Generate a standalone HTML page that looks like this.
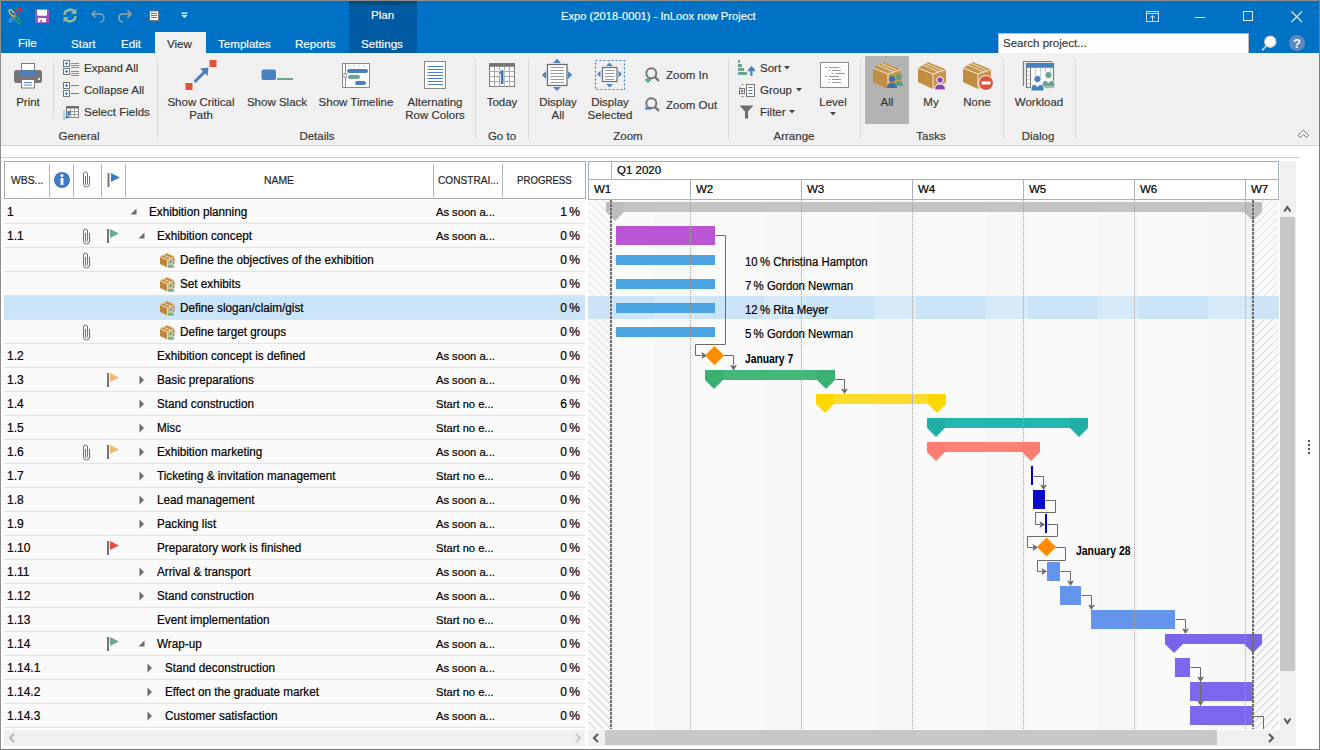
<!DOCTYPE html>
<html><head><meta charset="utf-8">
<style>
*{margin:0;padding:0;box-sizing:border-box}
html,body{width:1320px;height:750px;overflow:hidden;background:#fff;font-family:"Liberation Sans",sans-serif;font-size:12px;color:#1e1e1e}
.a{position:absolute}
.t{position:absolute;white-space:nowrap;line-height:14px}
#title{position:absolute;left:0;top:0;width:1320px;height:53px;background:#0072c6;color:#fff}
#ribbon{position:absolute;left:0;top:53px;width:1320px;height:93px;background:#f0f0f0;border-bottom:1px solid #d5d5d5}
#ribbon .a,#ribbon .t,#ribbon .rl,#ribbon .sep{margin-top:-53px}
#ribbon .t{font-size:11.5px}
.t,.rl{-webkit-text-stroke:0.15px currentColor}
#ribbon .t,.rl{color:#262626}
.tab2{font-size:11.5px}
.sep{position:absolute;width:1px;background:#dadada}
.rl{position:absolute;color:#333;font-size:11.5px;line-height:13px;text-align:center;white-space:nowrap}
.row{position:absolute;left:4px;width:581px;height:24px;background:#fafafa;border-bottom:1px solid #e3e3e3}
.ct{position:absolute;white-space:nowrap;line-height:14px;color:#000;-webkit-text-stroke:0.2px #000}
</style></head><body>
<div id="title">
  <div class="t" style="left:561px;top:9px;font-size:11.2px">Expo (2018-0001) - InLoox now Project</div>
  <div class="a" style="left:349px;top:0;width:68px;height:53px;background:#005ba3"></div>
  <div class="a" style="left:349px;top:1px;width:68px;height:4px;background:#004a80"></div>
  <div class="t" style="left:371px;top:8px;font-size:11.6px">Plan</div>
  <div class="t" style="left:361px;top:37px;font-size:11.6px">Settings</div>
  <div class="a" style="left:155px;top:32px;width:51px;height:21px;background:#f0f0f0"></div>
  <div class="t" style="left:18px;top:36px;font-size:11.6px">File</div>
  <div class="t" style="left:71px;top:37px;font-size:11.6px">Start</div>
  <div class="t" style="left:121px;top:37px;font-size:11.6px">Edit</div>
  <div class="t" style="left:167px;top:37px;color:#333;font-size:11.6px">View</div>
  <div class="t" style="left:218px;top:37px;font-size:11.6px">Templates</div>
  <div class="t" style="left:295px;top:37px;font-size:11.6px">Reports</div>
  <div class="a" style="left:998px;top:33px;width:251px;height:20px;background:#fff;border:1px solid #bdbdbd;border-bottom:none"></div>
  <div class="t" style="left:1003px;top:36px;color:#333;font-size:11.5px">Search project...</div>
  <!-- QAT -->
  <svg class="a" style="left:7px;top:7px" width="16" height="19" viewBox="0 0 16 19">
    <ellipse cx="4.9" cy="6" rx="4" ry="1.7" transform="rotate(50 4.9 6)" fill="none" stroke="#f5d20f" stroke-width="1.2"/>
    <ellipse cx="10.6" cy="5.2" rx="4.7" ry="1.7" transform="rotate(-55 10.6 5.2)" fill="none" stroke="#d9342b" stroke-width="1.2"/>
    <ellipse cx="10.5" cy="12.9" rx="4.6" ry="1.7" transform="rotate(55 10.5 12.9)" fill="none" stroke="#3aa848" stroke-width="1.2"/>
    <ellipse cx="4.9" cy="12" rx="3.6" ry="1.2" transform="rotate(-50 4.9 12)" fill="none" stroke="#7fa9d6" stroke-width="1"/>
    <circle cx="7.5" cy="9" r="1" fill="#e8962a"/>
  </svg>
  <svg class="a" style="left:35px;top:9px" width="14" height="14" viewBox="0 0 14 14">
    <rect x="0" y="0" width="14" height="14" fill="#9857b4"/>
    <path d="M2 0.8 H12 V5.5 Q12 6.8 10.8 6.8 H3.2 Q2 6.8 2 5.5Z" fill="#fff"/>
    <rect x="3" y="9" width="8" height="4.2" fill="#fff"/>
    <rect x="5.4" y="10.8" width="1.6" height="2.4" fill="#9857b4"/>
  </svg>
  <svg class="a" style="left:62px;top:7px" width="16" height="17" viewBox="0 0 16 17">
    <path d="M2.5 8 A5.5 5.5 0 0 1 12.5 5" fill="none" stroke="#8fb8a0" stroke-width="2.6"/>
    <path d="M13.5 9 A5.5 5.5 0 0 1 3.5 12" fill="none" stroke="#8fb8a0" stroke-width="2.6"/>
    <path d="M14.5 1.5 L14.5 7 L9 7Z" fill="#8fb8a0"/>
    <path d="M1.5 15.5 L1.5 10 L7 10Z" fill="#8fb8a0"/>
  </svg>
  <svg class="a" style="left:90px;top:9px" width="15" height="14" viewBox="0 0 15 14">
    <path d="M2 5 L10 5 A4 4 0 0 1 10 13" fill="none" stroke="#98a4b2" stroke-width="1.4"/>
    <path d="M5.5 1.5 L2 5 L5.5 8.5" fill="none" stroke="#98a4b2" stroke-width="1.4"/>
  </svg>
  <svg class="a" style="left:118px;top:9px" width="15" height="14" viewBox="0 0 15 14">
    <path d="M13 5 L5 5 A4 4 0 0 0 5 13" fill="none" stroke="#a8a39a" stroke-width="1.6"/>
    <path d="M9.5 1.5 L13 5 L9.5 8.5" fill="none" stroke="#a8a39a" stroke-width="1.6"/>
  </svg>
  <svg class="a" style="left:145px;top:7px" width="18" height="17" viewBox="0 0 18 17">
    <path d="M9 1 L7.5 2.5 L10.5 2.5Z M9 16 L7.5 14.5 L10.5 14.5Z M1 8.5 L2.5 7 L2.5 10Z M17 8.5 L15.5 7 L15.5 10Z" fill="#4a86c0" opacity=".7"/>
    <rect x="4.5" y="4" width="9" height="9.5" fill="#fff" stroke="#777" stroke-width="1"/>
    <path d="M6 6.5h6M6 8.5h6M6 10.5h6" stroke="#777" stroke-width="1"/>
  </svg>
  <svg class="a" style="left:181px;top:12px" width="8" height="7" viewBox="0 0 8 7">
    <rect x="0.5" y="0.5" width="6" height="1.3" fill="#fff"/>
    <path d="M0.5 3 L6.5 3 L3.5 6.2Z" fill="#fff"/>
  </svg>
  <!-- window buttons -->
  <svg class="a" style="left:1145px;top:10px" width="15" height="13" viewBox="0 0 15 13">
    <rect x="1.5" y="1.5" width="12" height="10" fill="none" stroke="#d8d8d8" stroke-width="1"/>
    <path d="M1.5 3.5h12" stroke="#d8d8d8"/>
    <path d="M7.5 11 V5.5 M5 8 L7.5 5.5 L10 8" fill="none" stroke="#d8d8d8"/>
  </svg>
  <div class="a" style="left:1195px;top:17px;width:10px;height:1px;background:#e8e8e8"></div>
  <div class="a" style="left:1243px;top:11px;width:10px;height:10px;border:1px solid #e8e8e8"></div>
  <svg class="a" style="left:1290.5px;top:10.5px" width="12" height="12" viewBox="0 0 12 12">
    <path d="M0.5 0.5 L11 11 M11 0.5 L0.5 11" stroke="#e8e8e8" stroke-width="1.1"/>
  </svg>
  <svg class="a" style="left:1260px;top:33px" width="20" height="20" viewBox="0 0 20 20">
    <circle cx="10.3" cy="8.7" r="5.6" fill="#fff" stroke="#cfcfcf" stroke-width="1.3"/>
    <path d="M6.3 12.7 L2.2 17.2" stroke="#e0e0e0" stroke-width="1.6"/>
  </svg>
  <svg class="a" style="left:1288px;top:34px" width="18" height="18" viewBox="0 0 18 18">
    <circle cx="9" cy="9" r="8" fill="#5d89c0"/>
    <text x="9" y="14" text-anchor="middle" font-family="Liberation Sans" font-weight="bold" font-size="13" fill="#fff">?</text>
  </svg>
</div>

<div id="ribbon">
  <!-- General -->
  <svg class="a" style="left:13px;top:62px" width="30" height="27" viewBox="0 0 30 27">
    <rect x="8.5" y="1.5" width="13" height="8" fill="#fff" stroke="#7a7a7a"/>
    <rect x="1" y="8" width="28" height="13" rx="2.5" fill="#767676"/>
    <rect x="7" y="8.5" width="16" height="4.5" fill="#4a7fc0"/>
    <rect x="8.5" y="17.5" width="13" height="8.5" fill="#fff" stroke="#7a7a7a"/>
    <path d="M11 20.5h8M11 23h8" stroke="#4a7fc0" stroke-width="0.9"/>
    <rect x="25" y="16" width="2" height="2" fill="#fff"/>
  </svg>
  <div class="rl" style="left:0;width:56px;top:95px;line-height:14px">Print</div>
  <div class="sep" style="left:53px;top:61px;height:58px"></div>
  <svg class="a" style="left:62px;top:59px" width="18" height="18" viewBox="0 0 18 18">
    <rect x="1.5" y="1.5" width="6" height="6" fill="#fff" stroke="#777"/>
    <rect x="1.5" y="9.5" width="6" height="6" fill="#fff" stroke="#777"/>
    <path d="M3 4.5h3M4.5 3v3M3 12.5h3M4.5 11v3" stroke="#3e7ac0"/>
    <path d="M9 4.5h8M9 6.5h8M9 8.5h8M9 12.5h8M9 14.5h8M9 16.5h8" stroke="#4a7fc0" stroke-width="0.8"/>
  </svg>
  <div class="t" style="left:84px;top:61px;color:#333">Expand All</div>
  <svg class="a" style="left:62px;top:81px" width="18" height="18" viewBox="0 0 18 18">
    <rect x="1.5" y="1.5" width="6" height="6" fill="#fff" stroke="#777"/>
    <rect x="1.5" y="9.5" width="6" height="6" fill="#fff" stroke="#777"/>
    <path d="M3 4.5h3M4.5 3v3M3 12.5h3M4.5 11v3" stroke="#3e7ac0"/>
    <path d="M9 4.5h8M9 12.5h8" stroke="#4a7fc0"/>
  </svg>
  <div class="t" style="left:84px;top:83px;color:#333">Collapse All</div>
  <svg class="a" style="left:62px;top:104px" width="18" height="17" viewBox="0 0 18 17">
    <rect x="4.5" y="2.5" width="12" height="11" fill="#fff" stroke="#808080"/>
    <rect x="4" y="2" width="13" height="2.5" fill="#6e6e6e"/>
    <path d="M4.5 7.5h12M4.5 10.5h12M8.5 4v10M12.5 4v10" stroke="#9a9a9a"/>
    <rect x="1" y="6" width="2.3" height="10" fill="#b8cfe8"/>
    <path d="M3.5 14 Q7 13 7 8.5" fill="none" stroke="#3e7ac0" stroke-width="1.6"/>
    <path d="M4.5 9.5 L7 6.5 L9.5 9.5Z" fill="#3e7ac0"/>
  </svg>
  <div class="t" style="left:84px;top:105px;color:#333">Select Fields</div>
  <div class="rl" style="left:29px;width:100px;top:129px;line-height:14px">General</div>
  <div class="sep" style="left:157px;top:59px;height:80px"></div>
  <!-- Details -->
  <svg class="a" style="left:184px;top:59px" width="34" height="33" viewBox="0 0 34 33">
    <rect x="1.5" y="24" width="7" height="7" fill="#e0533a"/>
    <rect x="25.5" y="1" width="7" height="7" fill="#e0533a"/>
    <path d="M10.5 23 L22 11.5" stroke="#4a7fc0" stroke-width="3"/>
    <path d="M16 9.5 L24.5 8.5 L23.5 17Z" fill="#4a7fc0"/>
  </svg>
  <div class="rl" style="left:151px;width:100px;top:96px;line-height:13px">Show Critical<br>Path</div>
  <svg class="a" style="left:261px;top:69px" width="32" height="12" viewBox="0 0 32 12">
    <rect x="0.5" y="0.5" width="14.5" height="10.5" rx="2" fill="#4a7fc0"/>
    <rect x="16" y="9" width="16" height="2" fill="#6aa592"/>
  </svg>
  <div class="rl" style="left:227px;width:100px;top:96px;line-height:13px">Show Slack</div>
  <svg class="a" style="left:341px;top:62px" width="30" height="27" viewBox="0 0 30 27">
    <rect x="1.5" y="1.5" width="27" height="24" fill="#fff" stroke="#8a8a8a"/>
    <path d="M4.5 1.5v24" stroke="#8a8a8a"/>
    <rect x="3" y="11.5" width="2.5" height="4" fill="#fff" stroke="#8a8a8a" stroke-width="0.8"/>
    <path d="M8 2.5v3M13 2.5v3M18 2.5v3M23 2.5v3" stroke="#a9c2e0" stroke-width="0.8"/>
    <rect x="6" y="7" width="21" height="4" rx="2" fill="#4a7fc0"/>
    <rect x="7" y="13" width="12" height="4" rx="2" fill="#6aa592"/>
    <rect x="14" y="19" width="11" height="4" rx="2" fill="#4a7fc0"/>
  </svg>
  <div class="rl" style="left:306px;width:100px;top:96px;line-height:13px">Show Timeline</div>
  <svg class="a" style="left:423px;top:61px" width="24" height="29" viewBox="0 0 24 29">
    <rect x="1.5" y="0.5" width="21" height="27" fill="#fff" stroke="#8a8a8a"/>
    <path d="M4.5 5.5h15.5M4.5 8.5h15.5M4.5 11.5h15.5M4.5 14.5h15.5M4.5 17.5h15.5M4.5 20.5h15.5M4.5 23.5h15.5" stroke="#4a7fc0"/>
  </svg>
  <div class="rl" style="left:385px;width:100px;top:96px;line-height:13px">Alternating<br>Row Colors</div>
  <div class="rl" style="left:267px;width:100px;top:129px;line-height:14px">Details</div>
  <div class="sep" style="left:475px;top:59px;height:80px"></div>
  <!-- Go to -->
  <svg class="a" style="left:488px;top:62px" width="28" height="26" viewBox="0 0 28 26">
    <rect x="1.5" y="1.5" width="25" height="23" fill="#fff" stroke="#7a7a7a"/>
    <rect x="1" y="1" width="26" height="3.8" fill="#767676"/>
    <path d="M1.5 9.5h25M1.5 14.5h25M1.5 19.5h25M6.5 5v20M11.5 5v20M16.5 5v20M21.5 5v20" stroke="#a8a8a8"/>
    <path d="M12 9 L15.5 7.8 L15.5 22 L12.8 22 L12.8 11.3 L10.2 12.2Z" fill="#fff" stroke="#fff" stroke-width="1.6"/>
    <path d="M12 9 L15.5 7.8 L15.5 22 L12.8 22 L12.8 11.3 L10.2 12.2Z" fill="#3f7bc0"/>
  </svg>
  <div class="rl" style="left:452px;width:100px;top:95px;line-height:14px">Today</div>
  <div class="rl" style="left:452px;width:100px;top:129px;line-height:14px">Go to</div>
  <div class="sep" style="left:528px;top:59px;height:80px"></div>
  <!-- Zoom -->
  <svg class="a" style="left:541px;top:58px" width="33" height="34" viewBox="0 0 33 34">
    <path d="M16 0.8 L12 4.9 L20 4.9Z M16 33 L12 28.9 L20 28.9Z M0.8 17 L5.2 13 L5.2 21Z M31.2 17 L27 13 L27 21Z" fill="#4a86c8"/>
    <rect x="6.5" y="6.5" width="19.5" height="21" fill="#fff" stroke="#6e6e6e" stroke-width="1.3"/>
    <path d="M9.5 9.5h13.5M9.5 12.5h13.5M9.5 15.5h13.5M9.5 18.5h13.5M9.5 21.5h13.5M9.5 24.5h13.5" stroke="#9a9a9a"/>
  </svg>
  <div class="rl" style="left:508px;width:100px;top:96px;line-height:13px">Display<br>All</div>
  <svg class="a" style="left:594px;top:59px" width="32" height="32" viewBox="0 0 32 32">
    <rect x="1.5" y="1.5" width="29" height="29" fill="none" stroke="#3f7bc0" stroke-width="1.2" stroke-dasharray="2 2"/>
    <path d="M15.5 3.5 L12 7 L19 7Z M15.5 28.5 L12 25 L19 25Z M3 15 L6.5 11.5 L6.5 18.5Z M28 15 L24.5 11.5 L24.5 18.5Z" fill="#4a86c8"/>
    <rect x="8.5" y="8.5" width="14.5" height="14" fill="#fff" stroke="#6e6e6e" stroke-width="1.2"/>
    <path d="M11 11.5h9.5M11 14.5h9.5M11 17.5h9.5M11 20.5h9.5" stroke="#9a9a9a"/>
  </svg>
  <div class="rl" style="left:560px;width:100px;top:96px;line-height:13px">Display<br>Selected</div>
  <svg class="a" style="left:644px;top:67px" width="18" height="17" viewBox="0 0 18 17">
    <circle cx="7.3" cy="6.3" r="5" fill="none" stroke="#767676" stroke-width="2"/>
    <path d="M10.8 9.8 L15 14" stroke="#767676" stroke-width="2.4"/>
    <path d="M1 13h6M4 10v6" stroke="#5fa98c" stroke-width="2"/>
  </svg>
  <div class="t" style="left:666px;top:68px;color:#333">Zoom In</div>
  <svg class="a" style="left:644px;top:97px" width="18" height="17" viewBox="0 0 18 17">
    <circle cx="7.3" cy="6.3" r="5" fill="none" stroke="#767676" stroke-width="2"/>
    <path d="M10.8 9.8 L15 14" stroke="#767676" stroke-width="2.4"/>
    <path d="M1 11.5h6" stroke="#3e7ac0" stroke-width="2"/>
  </svg>
  <div class="t" style="left:666px;top:98px;color:#333">Zoom Out</div>
  <div class="rl" style="left:578px;width:100px;top:129px;line-height:14px">Zoom</div>
  <div class="sep" style="left:728px;top:59px;height:80px"></div>
  <!-- Arrange -->
  <svg class="a" style="left:737px;top:59px" width="19" height="18" viewBox="0 0 19 18">
    <rect x="1" y="1" width="2" height="3" fill="#6aa592"/>
    <rect x="1" y="5" width="4" height="3" fill="#6aa592"/>
    <rect x="1" y="9" width="6" height="3" fill="#6aa592"/>
    <rect x="1" y="13" width="9" height="3" fill="#6aa592"/>
    <path d="M14.5 17 V9 M11.5 12 L14.5 8.5 L17.5 12" stroke="#3e7ac0" stroke-width="2" fill="none"/>
  </svg>
  <div class="t" style="left:760px;top:61px;color:#333">Sort</div>
  <svg class="a" style="left:784px;top:66px" width="7" height="4"><path d="M0 0h6L3 3.5Z" fill="#444"/></svg>
  <svg class="a" style="left:738px;top:83px" width="18" height="15" viewBox="0 0 18 15">
    <path d="M3.5 1.5h2M1.5 3.5v1M1.5 10.5v1M3.5 13.5h2" stroke="#777"/>
    <rect x="1.5" y="5.5" width="5" height="5" fill="#fff" stroke="#777"/>
    <path d="M2.5 8h3M4 6.5v3" stroke="#555"/>
    <rect x="8.5" y="1.5" width="8" height="12" fill="#fff" stroke="#777"/>
    <path d="M10.5 4.5h4M10.5 7.5h4M10.5 10.5h4" stroke="#3e7ac0"/>
  </svg>
  <div class="t" style="left:760px;top:83px;color:#333">Group</div>
  <svg class="a" style="left:796px;top:88px" width="7" height="4"><path d="M0 0h6L3 3.5Z" fill="#444"/></svg>
  <svg class="a" style="left:739px;top:105px" width="15" height="14" viewBox="0 0 15 14">
    <path d="M0.5 0.5 H14.5 L9 6.5 V13.5 H6 V6.5Z" fill="#6e6e6e"/>
  </svg>
  <div class="t" style="left:760px;top:105px;color:#333">Filter</div>
  <svg class="a" style="left:789px;top:110px" width="7" height="4"><path d="M0 0h6L3 3.5Z" fill="#444"/></svg>
  <svg class="a" style="left:819px;top:61px" width="31" height="28" viewBox="0 0 31 28">
    <rect x="1.5" y="1.5" width="28" height="25" fill="#fff" stroke="#8a8a8a"/>
    <path d="M6 6.5h2M10 6.5h10M9.5 9.5h1.5M13 9.5h9M12.5 12.5h1.5M16.5 12.5h9.5M6 15.5h2M10 15.5h10M9.5 18.5h1.5M13 18.5h9M9.5 21.5h1.5M13 21.5h9" stroke="#9a9a9a"/>
  </svg>
  <div class="rl" style="left:783px;width:100px;top:95px;line-height:14px">Level</div>
  <svg class="a" style="left:830px;top:112px" width="7" height="4"><path d="M0 0h6L3 3.5Z" fill="#444"/></svg>
  <div class="rl" style="left:744px;width:100px;top:129px;line-height:14px">Arrange</div>
  <div class="sep" style="left:860px;top:59px;height:80px"></div>
  <!-- Tasks -->
  <div class="a" style="left:865px;top:56px;width:44px;height:68px;background:#b3b3b3"></div>
  <svg class="a" style="left:872px;top:61px" width="32" height="30" viewBox="0 0 32 30">
    <path d="M1 7 L11 1 L29 8.5 L16 13Z" fill="#c6954a"/>
    <path d="M1 7 L16 13 L16 28 L1 21Z" fill="#c08d41"/>
    <path d="M16 13 L29 8.5 L29 21.5 L16 28Z" fill="#c8964b"/>
    <path d="M1 7 L16 13 L29 8.5 M16 13 V28" stroke="#f0f0f0" stroke-width="0.9" fill="none"/>
    <path d="M6 4 L21.5 10.8 M9 2.4 L24.5 9.2" stroke="#f0e6d6" stroke-width="0.9" fill="none"/>
    <circle cx="20" cy="18" r="3" fill="#3f6fb0"/>
    <path d="M15 27 Q15 22 20 22 Q25 22 25 27Z" fill="#3f6fb0"/>
    <circle cx="27" cy="16" r="3" fill="#5f9e85"/>
    <path d="M23 25 Q23 20 27 20 Q31 20 31 25Z" fill="#5f9e85"/>
  </svg>
  <div class="rl" style="left:837px;width:100px;top:95px;line-height:14px">All</div>
  <svg class="a" style="left:917px;top:61px" width="31" height="30" viewBox="0 0 31 30">
    <path d="M1 7 L11 1 L29 8.5 L16 13Z" fill="#c6954a"/>
    <path d="M1 7 L16 13 L16 28 L1 21Z" fill="#c08d41"/>
    <path d="M16 13 L29 8.5 L29 21.5 L16 28Z" fill="#c8964b"/>
    <path d="M1 7 L16 13 L29 8.5 M16 13 V28" stroke="#f0f0f0" stroke-width="0.9" fill="none"/>
    <path d="M6 4 L21.5 10.8 M9 2.4 L24.5 9.2" stroke="#f0e6d6" stroke-width="0.9" fill="none"/>
    <circle cx="23" cy="19" r="3.3" fill="#8e44ad" stroke="#fff" stroke-width="1"/>
    <path d="M17.5 29 Q17.5 23 23 23 Q28.5 23 28.5 29Z" fill="#8e44ad" stroke="#fff" stroke-width="1"/>
  </svg>
  <div class="rl" style="left:881px;width:100px;top:95px;line-height:14px">My</div>
  <svg class="a" style="left:962px;top:61px" width="33" height="31" viewBox="0 0 33 31">
    <path d="M1 7 L11 1 L29 8.5 L16 13Z" fill="#c6954a"/>
    <path d="M1 7 L16 13 L16 28 L1 21Z" fill="#c08d41"/>
    <path d="M16 13 L29 8.5 L29 21.5 L16 28Z" fill="#c8964b"/>
    <path d="M1 7 L16 13 L29 8.5 M16 13 V28" stroke="#f0f0f0" stroke-width="0.9" fill="none"/>
    <path d="M6 4 L21.5 10.8 M9 2.4 L24.5 9.2" stroke="#f0e6d6" stroke-width="0.9" fill="none"/>
    <circle cx="24" cy="22" r="7.5" fill="#e0533a" stroke="#fff" stroke-width="1"/>
    <rect x="19.5" y="20.5" width="9" height="3" fill="#fff"/>
  </svg>
  <div class="rl" style="left:927px;width:100px;top:95px;line-height:14px">None</div>
  <div class="rl" style="left:881px;width:100px;top:129px;line-height:14px">Tasks</div>
  <div class="sep" style="left:1003px;top:59px;height:80px"></div>
  <!-- Dialog -->
  <svg class="a" style="left:1021px;top:60px" width="35" height="32" viewBox="0 0 35 32">
    <path d="M2.5 26 V1.5 H31" fill="none" stroke="#7a7a7a" stroke-width="1.2"/>
    <rect x="5.5" y="3.5" width="27" height="24" fill="#fff" stroke="#7a7a7a" stroke-width="1.2"/>
    <rect x="5" y="3" width="28" height="4.8" fill="#4a7fbd"/>
    <path d="M9.5 7.8 V27.5" stroke="#7a7a7a" stroke-width="1.1"/>
    <path d="M14.5 8v11M19.5 8v11M24.5 8v7M29.5 8v7M6.5 11.5h2.5M6.5 15.5h2.5M6.5 19.5h2.5M6.5 23.5h2.5" stroke="#b6cbe6" stroke-width="1"/>
    <circle cx="27.5" cy="15" r="3.6" fill="#6aa592" stroke="#fff" stroke-width="0.8"/>
    <path d="M21 27 Q20.5 20.3 25 20.3 L27.5 22.8 L30 20.3 Q34.5 20.3 34 27Z" fill="#6aa592" stroke="#fff" stroke-width="0.8"/>
    <circle cx="16.5" cy="19" r="3.6" fill="#4a7fbd" stroke="#fff" stroke-width="0.8"/>
    <path d="M10 31 Q9.5 24.3 14 24.3 L16.5 26.8 L19 24.3 Q23.5 24.3 23 31Z" fill="#4a7fbd" stroke="#fff" stroke-width="0.8"/>
  </svg>
  <div class="rl" style="left:989px;width:100px;top:95px;line-height:14px">Workload</div>
  <div class="rl" style="left:988px;width:100px;top:129px;line-height:14px">Dialog</div>
  <div class="sep" style="left:1075px;top:59px;height:80px"></div>
  <svg class="a" style="left:1297px;top:129px" width="13" height="10" viewBox="0 0 13 10">
    <path d="M6.4 1.2 L11.6 6.2 L9.4 8.4 L6.4 5.3 L3.4 8.4 L1.2 6.2Z" fill="#fff" stroke="#5a5a5a" stroke-width="0.9" stroke-linejoin="miter"/>
  </svg>
</div>

<div class="a" style="left:4px;top:161px;width:582px;height:38px;background:#fff;border:1px solid #a9a9a9"></div>
<div class="a" style="left:49px;top:164px;width:1px;height:33px;background:#a7b4c4"></div>
<div class="a" style="left:73px;top:164px;width:1px;height:33px;background:#a7b4c4"></div>
<div class="a" style="left:101px;top:164px;width:1px;height:33px;background:#a7b4c4"></div>
<div class="a" style="left:125px;top:164px;width:1px;height:33px;background:#a7b4c4"></div>
<div class="a" style="left:433px;top:164px;width:1px;height:33px;background:#a7b4c4"></div>
<div class="a" style="left:502px;top:164px;width:1px;height:33px;background:#a7b4c4"></div>
<div class="ct" style="left:11px;top:173px;color:#333;font-size:11.5px;transform:scaleX(0.9);transform-origin:0 0">WBS...</div>
<svg class="a" style="left:53px;top:171px" width="18" height="18" viewBox="0 0 18 18"><circle cx="9" cy="9" r="8" fill="#3f7bc0"/><rect x="7.6" y="7" width="2.8" height="7" fill="#fff"/><circle cx="9" cy="4.6" r="1.5" fill="#fff"/></svg>
<svg class="a" style="left:82px;top:171px" width="8" height="17" viewBox="0 0 8 17"><path d="M3.5 5 V12.5 A1 1 0 0 0 5.5 12.5 V3 A2 2 0 0 0 1.5 3 V13 A3 3 0 0 0 7.5 13 V5" fill="none" stroke="#707070" stroke-width="1"/></svg>
<svg class="a" style="left:107px;top:172px" width="14" height="16" viewBox="0 0 14 16"><rect x="0.5" y="1" width="2" height="14" fill="#777"/><path d="M4 1 L13 5.5 L4 10Z" fill="#3f7bc0"/></svg>
<div class="ct" style="left:264px;top:173px;color:#333;font-size:11.5px;transform:scaleX(0.9);transform-origin:0 0">NAME</div>
<div class="ct" style="left:438px;top:173px;color:#333;font-size:11.5px;transform:scaleX(0.88);transform-origin:0 0">CONSTRAI...</div>
<div class="ct" style="left:517px;top:173px;color:#333;font-size:11.5px;transform:scaleX(0.84);transform-origin:0 0">PROGRESS</div>
<div class="row" style="top:200px;background:#fafafa"></div>
<div class="ct" style="left:7px;top:205px">1</div>
<svg class="a" style="left:130px;top:208px" width="7" height="7" viewBox="0 0 7 7"><path d="M6.5 0.5 V6.5 H0.5Z" fill="#6b6b6b"/></svg>
<div class="ct" style="left:149px;top:205px;transform:scaleX(0.975);transform-origin:0 0">Exhibition planning</div>
<div class="ct" style="left:436px;top:205px;font-size:11.5px;transform:scaleX(0.97);transform-origin:0 0">As soon a...</div>
<div class="ct" style="left:520px;width:60px;text-align:right;top:205px">1&#8201;%</div>
<div class="row" style="top:224px;background:#fafafa"></div>
<div class="ct" style="left:7px;top:229px">1.1</div>
<svg class="a" style="left:82px;top:228px" width="8" height="17" viewBox="0 0 8 17"><path d="M3.5 5 V12.5 A1 1 0 0 0 5.5 12.5 V3 A2 2 0 0 0 1.5 3 V13 A3 3 0 0 0 7.5 13 V5" fill="none" stroke="#707070" stroke-width="1"/></svg>
<svg class="a" style="left:107px;top:229px" width="14" height="15" viewBox="0 0 14 15"><rect x="0" y="0" width="2" height="14" fill="#737373"/><path d="M3 0 L12 4.5 L3 9Z" fill="#6aa892"/></svg>
<svg class="a" style="left:138px;top:232px" width="7" height="7" viewBox="0 0 7 7"><path d="M6.5 0.5 V6.5 H0.5Z" fill="#6b6b6b"/></svg>
<div class="ct" style="left:157px;top:229px;transform:scaleX(0.975);transform-origin:0 0">Exhibition concept</div>
<div class="ct" style="left:436px;top:229px;font-size:11.5px;transform:scaleX(0.97);transform-origin:0 0">As soon a...</div>
<div class="ct" style="left:520px;width:60px;text-align:right;top:229px">0&#8201;%</div>
<div class="row" style="top:248px;background:#fafafa"></div>
<svg class="a" style="left:82px;top:252px" width="8" height="17" viewBox="0 0 8 17"><path d="M3.5 5 V12.5 A1 1 0 0 0 5.5 12.5 V3 A2 2 0 0 0 1.5 3 V13 A3 3 0 0 0 7.5 13 V5" fill="none" stroke="#707070" stroke-width="1"/></svg>
<svg class="a" style="left:159px;top:253px" width="17" height="16" viewBox="0 0 17 16"><path d="M1 3.5 L8 0.3 L15.5 3.8 L8.5 7Z" fill="#c39046"/><path d="M1 3.5 L8.5 7 L8.5 14.5 L1 11Z" fill="#bd883c"/><path d="M8.5 7 L15.5 3.8 L15.5 11 L8.5 14.5Z" fill="#c39046"/><path d="M1 3.5 L8.5 7 L15.5 3.8 M4.3 1.9 L11.8 5.4 M8.5 7 V14.5" stroke="#f4efe6" stroke-width="0.8" fill="none"/><circle cx="11.8" cy="8.8" r="2" fill="#5fa98c" stroke="#fafafa" stroke-width="0.7"/><path d="M8.2 15 Q8.2 11.3 10.5 11.3 L11.8 12.5 L13.1 11.3 Q15.4 11.3 15.4 15Z" fill="#5fa98c" stroke="#fafafa" stroke-width="0.7"/></svg>
<div class="ct" style="left:180px;top:253px;transform:scaleX(0.975);transform-origin:0 0">Define the objectives of the exhibition</div>
<div class="ct" style="left:520px;width:60px;text-align:right;top:253px">0&#8201;%</div>
<div class="row" style="top:272px;background:#fafafa"></div>
<svg class="a" style="left:159px;top:277px" width="17" height="16" viewBox="0 0 17 16"><path d="M1 3.5 L8 0.3 L15.5 3.8 L8.5 7Z" fill="#c39046"/><path d="M1 3.5 L8.5 7 L8.5 14.5 L1 11Z" fill="#bd883c"/><path d="M8.5 7 L15.5 3.8 L15.5 11 L8.5 14.5Z" fill="#c39046"/><path d="M1 3.5 L8.5 7 L15.5 3.8 M4.3 1.9 L11.8 5.4 M8.5 7 V14.5" stroke="#f4efe6" stroke-width="0.8" fill="none"/><circle cx="11.8" cy="8.8" r="2" fill="#5fa98c" stroke="#fafafa" stroke-width="0.7"/><path d="M8.2 15 Q8.2 11.3 10.5 11.3 L11.8 12.5 L13.1 11.3 Q15.4 11.3 15.4 15Z" fill="#5fa98c" stroke="#fafafa" stroke-width="0.7"/></svg>
<div class="ct" style="left:180px;top:277px;transform:scaleX(0.975);transform-origin:0 0">Set exhibits</div>
<div class="ct" style="left:520px;width:60px;text-align:right;top:277px">0&#8201;%</div>
<div class="row" style="top:296px;background:#cce4f7"></div>
<svg class="a" style="left:159px;top:301px" width="17" height="16" viewBox="0 0 17 16"><path d="M1 3.5 L8 0.3 L15.5 3.8 L8.5 7Z" fill="#c39046"/><path d="M1 3.5 L8.5 7 L8.5 14.5 L1 11Z" fill="#bd883c"/><path d="M8.5 7 L15.5 3.8 L15.5 11 L8.5 14.5Z" fill="#c39046"/><path d="M1 3.5 L8.5 7 L15.5 3.8 M4.3 1.9 L11.8 5.4 M8.5 7 V14.5" stroke="#f4efe6" stroke-width="0.8" fill="none"/><circle cx="11.8" cy="8.8" r="2" fill="#5fa98c" stroke="#fafafa" stroke-width="0.7"/><path d="M8.2 15 Q8.2 11.3 10.5 11.3 L11.8 12.5 L13.1 11.3 Q15.4 11.3 15.4 15Z" fill="#5fa98c" stroke="#fafafa" stroke-width="0.7"/></svg>
<div class="ct" style="left:180px;top:301px;transform:scaleX(0.975);transform-origin:0 0">Define slogan/claim/gist</div>
<div class="ct" style="left:520px;width:60px;text-align:right;top:301px">0&#8201;%</div>
<div class="row" style="top:320px;background:#fafafa"></div>
<svg class="a" style="left:82px;top:324px" width="8" height="17" viewBox="0 0 8 17"><path d="M3.5 5 V12.5 A1 1 0 0 0 5.5 12.5 V3 A2 2 0 0 0 1.5 3 V13 A3 3 0 0 0 7.5 13 V5" fill="none" stroke="#707070" stroke-width="1"/></svg>
<svg class="a" style="left:159px;top:325px" width="17" height="16" viewBox="0 0 17 16"><path d="M1 3.5 L8 0.3 L15.5 3.8 L8.5 7Z" fill="#c39046"/><path d="M1 3.5 L8.5 7 L8.5 14.5 L1 11Z" fill="#bd883c"/><path d="M8.5 7 L15.5 3.8 L15.5 11 L8.5 14.5Z" fill="#c39046"/><path d="M1 3.5 L8.5 7 L15.5 3.8 M4.3 1.9 L11.8 5.4 M8.5 7 V14.5" stroke="#f4efe6" stroke-width="0.8" fill="none"/><circle cx="11.8" cy="8.8" r="2" fill="#5fa98c" stroke="#fafafa" stroke-width="0.7"/><path d="M8.2 15 Q8.2 11.3 10.5 11.3 L11.8 12.5 L13.1 11.3 Q15.4 11.3 15.4 15Z" fill="#5fa98c" stroke="#fafafa" stroke-width="0.7"/></svg>
<div class="ct" style="left:180px;top:325px;transform:scaleX(0.975);transform-origin:0 0">Define target groups</div>
<div class="ct" style="left:520px;width:60px;text-align:right;top:325px">0&#8201;%</div>
<div class="row" style="top:344px;background:#fafafa"></div>
<div class="ct" style="left:7px;top:349px">1.2</div>
<div class="ct" style="left:157px;top:349px;transform:scaleX(0.975);transform-origin:0 0">Exhibition concept is defined</div>
<div class="ct" style="left:436px;top:349px;font-size:11.5px;transform:scaleX(0.97);transform-origin:0 0">As soon a...</div>
<div class="ct" style="left:520px;width:60px;text-align:right;top:349px">0&#8201;%</div>
<div class="row" style="top:368px;background:#fafafa"></div>
<div class="ct" style="left:7px;top:373px">1.3</div>
<svg class="a" style="left:107px;top:373px" width="14" height="15" viewBox="0 0 14 15"><rect x="0" y="0" width="2" height="14" fill="#737373"/><path d="M3 0 L12 4.5 L3 9Z" fill="#f0b96e"/></svg>
<svg class="a" style="left:139px;top:375px" width="6" height="10" viewBox="0 0 6 10"><path d="M0.5 0.5 L5 5 L0.5 9.5Z" fill="#6b6b6b"/></svg>
<div class="ct" style="left:157px;top:373px;transform:scaleX(0.975);transform-origin:0 0">Basic preparations</div>
<div class="ct" style="left:436px;top:373px;font-size:11.5px;transform:scaleX(0.97);transform-origin:0 0">As soon a...</div>
<div class="ct" style="left:520px;width:60px;text-align:right;top:373px">0&#8201;%</div>
<div class="row" style="top:392px;background:#fafafa"></div>
<div class="ct" style="left:7px;top:397px">1.4</div>
<svg class="a" style="left:139px;top:399px" width="6" height="10" viewBox="0 0 6 10"><path d="M0.5 0.5 L5 5 L0.5 9.5Z" fill="#6b6b6b"/></svg>
<div class="ct" style="left:157px;top:397px;transform:scaleX(0.975);transform-origin:0 0">Stand construction</div>
<div class="ct" style="left:436px;top:397px;font-size:11.5px;transform:scaleX(0.97);transform-origin:0 0">Start no e...</div>
<div class="ct" style="left:520px;width:60px;text-align:right;top:397px">6&#8201;%</div>
<div class="row" style="top:416px;background:#fafafa"></div>
<div class="ct" style="left:7px;top:421px">1.5</div>
<svg class="a" style="left:139px;top:423px" width="6" height="10" viewBox="0 0 6 10"><path d="M0.5 0.5 L5 5 L0.5 9.5Z" fill="#6b6b6b"/></svg>
<div class="ct" style="left:157px;top:421px;transform:scaleX(0.975);transform-origin:0 0">Misc</div>
<div class="ct" style="left:436px;top:421px;font-size:11.5px;transform:scaleX(0.97);transform-origin:0 0">Start no e...</div>
<div class="ct" style="left:520px;width:60px;text-align:right;top:421px">0&#8201;%</div>
<div class="row" style="top:440px;background:#fafafa"></div>
<div class="ct" style="left:7px;top:445px">1.6</div>
<svg class="a" style="left:82px;top:444px" width="8" height="17" viewBox="0 0 8 17"><path d="M3.5 5 V12.5 A1 1 0 0 0 5.5 12.5 V3 A2 2 0 0 0 1.5 3 V13 A3 3 0 0 0 7.5 13 V5" fill="none" stroke="#707070" stroke-width="1"/></svg>
<svg class="a" style="left:107px;top:445px" width="14" height="15" viewBox="0 0 14 15"><rect x="0" y="0" width="2" height="14" fill="#737373"/><path d="M3 0 L12 4.5 L3 9Z" fill="#f0b96e"/></svg>
<svg class="a" style="left:139px;top:447px" width="6" height="10" viewBox="0 0 6 10"><path d="M0.5 0.5 L5 5 L0.5 9.5Z" fill="#6b6b6b"/></svg>
<div class="ct" style="left:157px;top:445px;transform:scaleX(0.975);transform-origin:0 0">Exhibition marketing</div>
<div class="ct" style="left:436px;top:445px;font-size:11.5px;transform:scaleX(0.97);transform-origin:0 0">As soon a...</div>
<div class="ct" style="left:520px;width:60px;text-align:right;top:445px">0&#8201;%</div>
<div class="row" style="top:464px;background:#fafafa"></div>
<div class="ct" style="left:7px;top:469px">1.7</div>
<svg class="a" style="left:139px;top:471px" width="6" height="10" viewBox="0 0 6 10"><path d="M0.5 0.5 L5 5 L0.5 9.5Z" fill="#6b6b6b"/></svg>
<div class="ct" style="left:157px;top:469px;transform:scaleX(0.975);transform-origin:0 0">Ticketing &amp; invitation management</div>
<div class="ct" style="left:436px;top:469px;font-size:11.5px;transform:scaleX(0.97);transform-origin:0 0">Start no e...</div>
<div class="ct" style="left:520px;width:60px;text-align:right;top:469px">0&#8201;%</div>
<div class="row" style="top:488px;background:#fafafa"></div>
<div class="ct" style="left:7px;top:493px">1.8</div>
<svg class="a" style="left:139px;top:495px" width="6" height="10" viewBox="0 0 6 10"><path d="M0.5 0.5 L5 5 L0.5 9.5Z" fill="#6b6b6b"/></svg>
<div class="ct" style="left:157px;top:493px;transform:scaleX(0.975);transform-origin:0 0">Lead management</div>
<div class="ct" style="left:436px;top:493px;font-size:11.5px;transform:scaleX(0.97);transform-origin:0 0">As soon a...</div>
<div class="ct" style="left:520px;width:60px;text-align:right;top:493px">0&#8201;%</div>
<div class="row" style="top:512px;background:#fafafa"></div>
<div class="ct" style="left:7px;top:517px">1.9</div>
<svg class="a" style="left:139px;top:519px" width="6" height="10" viewBox="0 0 6 10"><path d="M0.5 0.5 L5 5 L0.5 9.5Z" fill="#6b6b6b"/></svg>
<div class="ct" style="left:157px;top:517px;transform:scaleX(0.975);transform-origin:0 0">Packing list</div>
<div class="ct" style="left:436px;top:517px;font-size:11.5px;transform:scaleX(0.97);transform-origin:0 0">As soon a...</div>
<div class="ct" style="left:520px;width:60px;text-align:right;top:517px">0&#8201;%</div>
<div class="row" style="top:536px;background:#fafafa"></div>
<div class="ct" style="left:7px;top:541px">1.10</div>
<svg class="a" style="left:107px;top:541px" width="14" height="15" viewBox="0 0 14 15"><rect x="0" y="0" width="2" height="14" fill="#737373"/><path d="M3 0 L12 4.5 L3 9Z" fill="#e0533a"/></svg>
<div class="ct" style="left:157px;top:541px;transform:scaleX(0.975);transform-origin:0 0">Preparatory work is finished</div>
<div class="ct" style="left:436px;top:541px;font-size:11.5px;transform:scaleX(0.97);transform-origin:0 0">Start no e...</div>
<div class="ct" style="left:520px;width:60px;text-align:right;top:541px">0&#8201;%</div>
<div class="row" style="top:560px;background:#fafafa"></div>
<div class="ct" style="left:7px;top:565px">1.11</div>
<svg class="a" style="left:139px;top:567px" width="6" height="10" viewBox="0 0 6 10"><path d="M0.5 0.5 L5 5 L0.5 9.5Z" fill="#6b6b6b"/></svg>
<div class="ct" style="left:157px;top:565px;transform:scaleX(0.975);transform-origin:0 0">Arrival &amp; transport</div>
<div class="ct" style="left:436px;top:565px;font-size:11.5px;transform:scaleX(0.97);transform-origin:0 0">As soon a...</div>
<div class="ct" style="left:520px;width:60px;text-align:right;top:565px">0&#8201;%</div>
<div class="row" style="top:584px;background:#fafafa"></div>
<div class="ct" style="left:7px;top:589px">1.12</div>
<svg class="a" style="left:139px;top:591px" width="6" height="10" viewBox="0 0 6 10"><path d="M0.5 0.5 L5 5 L0.5 9.5Z" fill="#6b6b6b"/></svg>
<div class="ct" style="left:157px;top:589px;transform:scaleX(0.975);transform-origin:0 0">Stand construction</div>
<div class="ct" style="left:436px;top:589px;font-size:11.5px;transform:scaleX(0.97);transform-origin:0 0">As soon a...</div>
<div class="ct" style="left:520px;width:60px;text-align:right;top:589px">0&#8201;%</div>
<div class="row" style="top:608px;background:#fafafa"></div>
<div class="ct" style="left:7px;top:613px">1.13</div>
<div class="ct" style="left:157px;top:613px;transform:scaleX(0.975);transform-origin:0 0">Event implementation</div>
<div class="ct" style="left:436px;top:613px;font-size:11.5px;transform:scaleX(0.97);transform-origin:0 0">Start no e...</div>
<div class="ct" style="left:520px;width:60px;text-align:right;top:613px">0&#8201;%</div>
<div class="row" style="top:632px;background:#fafafa"></div>
<div class="ct" style="left:7px;top:637px">1.14</div>
<svg class="a" style="left:107px;top:637px" width="14" height="15" viewBox="0 0 14 15"><rect x="0" y="0" width="2" height="14" fill="#737373"/><path d="M3 0 L12 4.5 L3 9Z" fill="#6aa892"/></svg>
<svg class="a" style="left:138px;top:640px" width="7" height="7" viewBox="0 0 7 7"><path d="M6.5 0.5 V6.5 H0.5Z" fill="#6b6b6b"/></svg>
<div class="ct" style="left:157px;top:637px;transform:scaleX(0.975);transform-origin:0 0">Wrap-up</div>
<div class="ct" style="left:436px;top:637px;font-size:11.5px;transform:scaleX(0.97);transform-origin:0 0">As soon a...</div>
<div class="ct" style="left:520px;width:60px;text-align:right;top:637px">0&#8201;%</div>
<div class="row" style="top:656px;background:#fafafa"></div>
<div class="ct" style="left:7px;top:661px">1.14.1</div>
<svg class="a" style="left:147px;top:663px" width="6" height="10" viewBox="0 0 6 10"><path d="M0.5 0.5 L5 5 L0.5 9.5Z" fill="#6b6b6b"/></svg>
<div class="ct" style="left:165px;top:661px;transform:scaleX(0.975);transform-origin:0 0">Stand deconstruction</div>
<div class="ct" style="left:436px;top:661px;font-size:11.5px;transform:scaleX(0.97);transform-origin:0 0">As soon a...</div>
<div class="ct" style="left:520px;width:60px;text-align:right;top:661px">0&#8201;%</div>
<div class="row" style="top:680px;background:#fafafa"></div>
<div class="ct" style="left:7px;top:685px">1.14.2</div>
<svg class="a" style="left:147px;top:687px" width="6" height="10" viewBox="0 0 6 10"><path d="M0.5 0.5 L5 5 L0.5 9.5Z" fill="#6b6b6b"/></svg>
<div class="ct" style="left:165px;top:685px;transform:scaleX(0.975);transform-origin:0 0">Effect on the graduate market</div>
<div class="ct" style="left:436px;top:685px;font-size:11.5px;transform:scaleX(0.97);transform-origin:0 0">Start no e...</div>
<div class="ct" style="left:520px;width:60px;text-align:right;top:685px">0&#8201;%</div>
<div class="row" style="top:704px;background:#fafafa"></div>
<div class="ct" style="left:7px;top:709px">1.14.3</div>
<svg class="a" style="left:147px;top:711px" width="6" height="10" viewBox="0 0 6 10"><path d="M0.5 0.5 L5 5 L0.5 9.5Z" fill="#6b6b6b"/></svg>
<div class="ct" style="left:165px;top:709px;transform:scaleX(0.975);transform-origin:0 0">Customer satisfaction</div>
<div class="ct" style="left:436px;top:709px;font-size:11.5px;transform:scaleX(0.97);transform-origin:0 0">As soon a...</div>
<div class="ct" style="left:520px;width:60px;text-align:right;top:709px">0&#8201;%</div>
<div class="a" style="left:4px;top:730px;width:581px;height:16px;background:#f0f0f0"></div>
<svg class="a" style="left:8px;top:733px" width="8" height="10" viewBox="0 0 8 10"><path d="M6 1 L2 5 L6 9" fill="none" stroke="#b5b5b5" stroke-width="1.8"/></svg>
<svg class="a" style="left:574px;top:733px" width="8" height="10" viewBox="0 0 8 10"><path d="M2 1 L6 5 L2 9" fill="none" stroke="#c8c8c8" stroke-width="1.8"/></svg>
<div class="a" style="left:0;top:157px;width:1299px;height:1px;background:#c9c9c9"></div>
<div class="a" style="left:588px;top:200px;width:691px;height:529px;background:#fafafa;overflow:hidden">
<div class="a" style="left:65px;top:0;width:42px;height:529px;background:#f7f7f7"></div>
<div class="a" style="left:176px;top:0;width:42px;height:529px;background:#f7f7f7"></div>
<div class="a" style="left:287px;top:0;width:42px;height:529px;background:#f7f7f7"></div>
<div class="a" style="left:398px;top:0;width:42px;height:529px;background:#f7f7f7"></div>
<div class="a" style="left:509px;top:0;width:42px;height:529px;background:#f7f7f7"></div>
<div class="a" style="left:620px;top:0;width:42px;height:529px;background:#f7f7f7"></div>
<div class="a" style="left:0;top:96px;width:691px;height:23px;background:#cce4f7"></div>
<div class="a" style="left:65px;top:96px;width:42px;height:23px;background:#d6e9f8"></div>
<div class="a" style="left:176px;top:96px;width:42px;height:23px;background:#d6e9f8"></div>
<div class="a" style="left:287px;top:96px;width:42px;height:23px;background:#d6e9f8"></div>
<div class="a" style="left:398px;top:96px;width:42px;height:23px;background:#d6e9f8"></div>
<div class="a" style="left:509px;top:96px;width:42px;height:23px;background:#d6e9f8"></div>
<div class="a" style="left:620px;top:96px;width:42px;height:23px;background:#d6e9f8"></div>
<div class="a" style="left:0;top:0;width:23px;height:529px;background:repeating-linear-gradient(45deg,transparent 0,transparent 4.76px,#dedede 4.86px,#dedede 5.66px)"></div>
<div class="a" style="left:666px;top:0;width:25px;height:529px;background:repeating-linear-gradient(-45deg,transparent 0,transparent 4.76px,#dedede 4.86px,#dedede 5.66px)"></div>
<div class="a" style="left:18px;top:2px;width:656px;height:10px;background:#c4c4c4"></div>
<svg class="a" style="left:18px;top:2px" width="18" height="19" viewBox="0 0 18 19"><path d="M0 0H18V10L9 19L0 10Z" fill="#bdbdbd"/></svg>
<svg class="a" style="left:656px;top:2px" width="18" height="19" viewBox="0 0 18 19"><path d="M0 0H18V10L9 19L0 10Z" fill="#bdbdbd"/></svg>
<div class="a" style="left:28px;top:26px;width:99px;height:19px;background:#ba55d3"></div>
<div class="a" style="left:28px;top:55px;width:99px;height:10px;background:#4ba3e2"></div>
<div class="a" style="left:28px;top:79px;width:99px;height:10px;background:#4ba3e2"></div>
<div class="a" style="left:28px;top:103px;width:99px;height:10px;background:#4ba3e2"></div>
<div class="a" style="left:28px;top:127px;width:99px;height:10px;background:#4ba3e2"></div>
<div class="a" style="left:117px;top:170px;width:130px;height:10px;background:#41b87a"></div>
<svg class="a" style="left:117px;top:170px" width="18" height="19" viewBox="0 0 18 19"><path d="M0 0H18V10L9 19L0 10Z" fill="#3cb072"/></svg>
<svg class="a" style="left:229px;top:170px" width="18" height="19" viewBox="0 0 18 19"><path d="M0 0H18V10L9 19L0 10Z" fill="#3cb072"/></svg>
<div class="a" style="left:228px;top:194px;width:130px;height:10px;background:#ffdb2e"></div>
<svg class="a" style="left:228px;top:194px" width="18" height="19" viewBox="0 0 18 19"><path d="M0 0H18V10L9 19L0 10Z" fill="#ffd700"/></svg>
<svg class="a" style="left:340px;top:194px" width="18" height="19" viewBox="0 0 18 19"><path d="M0 0H18V10L9 19L0 10Z" fill="#ffd700"/></svg>
<div class="a" style="left:339px;top:218px;width:161px;height:10px;background:#22b8ae"></div>
<svg class="a" style="left:339px;top:218px" width="18" height="19" viewBox="0 0 18 19"><path d="M0 0H18V10L9 19L0 10Z" fill="#20aea6"/></svg>
<svg class="a" style="left:482px;top:218px" width="18" height="19" viewBox="0 0 18 19"><path d="M0 0H18V10L9 19L0 10Z" fill="#20aea6"/></svg>
<div class="a" style="left:339px;top:242px;width:113px;height:10px;background:#fb8274"></div>
<svg class="a" style="left:339px;top:242px" width="18" height="19" viewBox="0 0 18 19"><path d="M0 0H18V10L9 19L0 10Z" fill="#f97e71"/></svg>
<svg class="a" style="left:434px;top:242px" width="18" height="19" viewBox="0 0 18 19"><path d="M0 0H18V10L9 19L0 10Z" fill="#f97e71"/></svg>
<div class="a" style="left:443px;top:266px;width:2px;height:19px;background:#0000cd"></div>
<div class="a" style="left:445px;top:290px;width:12px;height:19px;background:#0a0acd"></div>
<div class="a" style="left:457px;top:314px;width:2px;height:19px;background:#0000cd"></div>
<div class="a" style="left:459px;top:362px;width:13px;height:19px;background:#6495ed"></div>
<div class="a" style="left:472px;top:386px;width:21px;height:19px;background:#6495ed"></div>
<div class="a" style="left:503px;top:410px;width:84px;height:19px;background:#6495ed"></div>
<div class="a" style="left:577px;top:434px;width:97px;height:10px;background:#7b68ee"></div>
<svg class="a" style="left:577px;top:434px" width="18" height="19" viewBox="0 0 18 19"><path d="M0 0H18V10L9 19L0 10Z" fill="#7864ea"/></svg>
<svg class="a" style="left:656px;top:434px" width="18" height="19" viewBox="0 0 18 19"><path d="M0 0H18V10L9 19L0 10Z" fill="#7864ea"/></svg>
<div class="a" style="left:587px;top:458px;width:15px;height:19px;background:#7b68ee"></div>
<div class="a" style="left:602px;top:482px;width:63px;height:19px;background:#7b68ee"></div>
<div class="a" style="left:602px;top:506px;width:63px;height:19px;background:#7b68ee"></div>
<div class="a" style="left:102px;top:0;width:1px;height:529px;background:repeating-linear-gradient(180deg,#a3a3a3 0,#a3a3a3 1px,transparent 1px,transparent 2px)"></div>
<div class="a" style="left:213px;top:0;width:1px;height:529px;background:repeating-linear-gradient(180deg,#a3a3a3 0,#a3a3a3 1px,transparent 1px,transparent 2px)"></div>
<div class="a" style="left:324px;top:0;width:1px;height:529px;background:repeating-linear-gradient(180deg,#a3a3a3 0,#a3a3a3 1px,transparent 1px,transparent 2px)"></div>
<div class="a" style="left:435px;top:0;width:1px;height:529px;background:repeating-linear-gradient(180deg,#a3a3a3 0,#a3a3a3 1px,transparent 1px,transparent 2px)"></div>
<div class="a" style="left:546px;top:0;width:1px;height:529px;background:repeating-linear-gradient(180deg,#a3a3a3 0,#a3a3a3 1px,transparent 1px,transparent 2px)"></div>
<div class="a" style="left:657px;top:0;width:1px;height:529px;background:repeating-linear-gradient(180deg,#a3a3a3 0,#a3a3a3 1px,transparent 1px,transparent 2px)"></div>
<div class="a" style="left:22px;top:0;width:2px;height:529px;background:repeating-linear-gradient(180deg,#6e6e6e 0,#6e6e6e 3px,transparent 3px,transparent 4px)"></div>
<div class="a" style="left:664px;top:0;width:2px;height:529px;background:repeating-linear-gradient(180deg,#6e6e6e 0,#6e6e6e 3px,transparent 3px,transparent 4px)"></div>
<svg class="a" style="left:0;top:0" width="691" height="529"><path d="M127.5 35.5 L137.5 35.5 L137.5 144.5 L107.5 144.5 L107.5 155.5 L114.5 155.5" fill="none" stroke="#6b6b6b" stroke-width="1"/><path d="M113.5 152.0 L114.5 155.5 L113.5 159.0 L119.0 155.5Z" fill="#6b6b6b"/><path d="M135.5 155.5 L145.5 155.5 L145.5 165.5" fill="none" stroke="#6b6b6b" stroke-width="1"/><path d="M142.0 165.0 L145.5 166.0 L149.0 165.0 L145.5 170.5Z" fill="#6b6b6b"/><path d="M247.5 179.5 L256.5 179.5 L256.5 189.5" fill="none" stroke="#6b6b6b" stroke-width="1"/><path d="M253.0 188.5 L256.5 189.5 L260.0 188.5 L256.5 194.0Z" fill="#6b6b6b"/><path d="M445.5 276.5 L455.5 276.5 L455.5 285.5" fill="none" stroke="#6b6b6b" stroke-width="1"/><path d="M452.0 284.5 L455.5 285.5 L459.0 284.5 L455.5 290.0Z" fill="#6b6b6b"/><path d="M457.5 300.5 L467.5 300.5 L467.5 312.5 L447.5 312.5 L447.5 324.5 L452.5 324.5" fill="none" stroke="#6b6b6b" stroke-width="1"/><path d="M451.5 321.0 L452.5 324.5 L451.5 328.0 L457.0 324.5Z" fill="#6b6b6b"/><path d="M459.5 324.5 L469.5 324.5 L469.5 336.5 L439.5 336.5 L439.5 347.5 L445.5 347.5" fill="none" stroke="#6b6b6b" stroke-width="1"/><path d="M444.5 344.0 L445.5 347.5 L444.5 351.0 L450.0 347.5Z" fill="#6b6b6b"/><path d="M467.5 347.5 L477.5 347.5 L477.5 360.5 L449.5 360.5 L449.5 371.5 L454.5 371.5" fill="none" stroke="#6b6b6b" stroke-width="1"/><path d="M453.5 368.0 L454.5 371.5 L453.5 375.0 L459.0 371.5Z" fill="#6b6b6b"/><path d="M472.5 371.5 L482.5 371.5 L482.5 381.5" fill="none" stroke="#6b6b6b" stroke-width="1"/><path d="M479.0 380.5 L482.5 381.5 L486.0 380.5 L482.5 386.0Z" fill="#6b6b6b"/><path d="M493.5 395.5 L503.5 395.5 L503.5 405.5" fill="none" stroke="#6b6b6b" stroke-width="1"/><path d="M500.0 404.5 L503.5 405.5 L507.0 404.5 L503.5 410.0Z" fill="#6b6b6b"/><path d="M587.5 419.5 L597.5 419.5 L597.5 429.5" fill="none" stroke="#6b6b6b" stroke-width="1"/><path d="M594.0 428.5 L597.5 429.5 L601.0 428.5 L597.5 434.0Z" fill="#6b6b6b"/><path d="M602.5 467.5 L612.5 467.5 L612.5 501.5" fill="none" stroke="#6b6b6b" stroke-width="1"/><path d="M609.0 476.5 L612.5 477.5 L616.0 476.5 L612.5 482.0Z" fill="#6b6b6b"/><path d="M609.0 500.5 L612.5 501.5 L616.0 500.5 L612.5 506.0Z" fill="#6b6b6b"/><path d="M665.5 516.5 L675.5 516.5 L675.5 530.5" fill="none" stroke="#6b6b6b" stroke-width="1"/><path d="M126.5 146.0 L136.0 155.5 L126.5 165.0 L117.0 155.5Z" fill="#ff8c00"/><path d="M458.5 337.5 L468.0 347 L458.5 356.5 L449.0 347Z" fill="#ff8c00"/></svg>
<div class="ct" style="left:157px;top:55px;transform:scaleX(0.95);transform-origin:0 0">10&#8201;% Christina Hampton</div>
<div class="ct" style="left:157px;top:79px;transform:scaleX(0.95);transform-origin:0 0">7&#8201;% Gordon Newman</div>
<div class="ct" style="left:157px;top:103px;transform:scaleX(0.95);transform-origin:0 0">12&#8201;% Rita Meyer</div>
<div class="ct" style="left:157px;top:127px;transform:scaleX(0.95);transform-origin:0 0">5&#8201;% Gordon Newman</div>
<div class="ct" style="left:157px;top:152px;font-weight:bold;-webkit-text-stroke:0;transform:scaleX(0.86);transform-origin:0 0">January 7</div>
<div class="ct" style="left:488px;top:344px;font-weight:bold;-webkit-text-stroke:0;transform:scaleX(0.87);transform-origin:0 0">January 28</div>
</div>
<div class="a" style="left:588px;top:161px;width:691px;height:39px;background:#fff;border:1px solid #a7b0bd"></div>
<div class="a" style="left:589px;top:179px;width:689px;height:1px;background:#a7b0bd"></div>
<div class="a" style="left:611px;top:162px;width:1px;height:17px;background:#a7b0bd"></div>
<div class="ct" style="left:617px;top:163px;font-size:11.5px">Q1 2020</div>
<div class="ct" style="left:594px;top:182px;font-size:11.5px">W1</div>
<div class="a" style="left:690px;top:180px;width:1px;height:19px;background:#a7b0bd"></div>
<div class="ct" style="left:696px;top:182px;font-size:11.5px">W2</div>
<div class="a" style="left:801px;top:180px;width:1px;height:19px;background:#a7b0bd"></div>
<div class="ct" style="left:807px;top:182px;font-size:11.5px">W3</div>
<div class="a" style="left:912px;top:180px;width:1px;height:19px;background:#a7b0bd"></div>
<div class="ct" style="left:918px;top:182px;font-size:11.5px">W4</div>
<div class="a" style="left:1023px;top:180px;width:1px;height:19px;background:#a7b0bd"></div>
<div class="ct" style="left:1029px;top:182px;font-size:11.5px">W5</div>
<div class="a" style="left:1134px;top:180px;width:1px;height:19px;background:#a7b0bd"></div>
<div class="ct" style="left:1140px;top:182px;font-size:11.5px">W6</div>
<div class="a" style="left:1245px;top:180px;width:1px;height:19px;background:#a7b0bd"></div>
<div class="ct" style="left:1251px;top:182px;font-size:11.5px">W7</div>
<div class="a" style="left:1280px;top:161px;width:16px;height:585px;background:#f0f0f0"></div>
<div class="a" style="left:1280px;top:217px;width:15px;height:454px;background:#c8c8c8"></div>
<svg class="a" style="left:1283px;top:205px" width="10" height="8" viewBox="0 0 10 8"><path d="M1.3 6.5 L4.4 2 L7.5 6.5" fill="none" stroke="#555" stroke-width="2"/></svg>
<svg class="a" style="left:1283px;top:717px" width="10" height="8" viewBox="0 0 10 8"><path d="M1.3 1.5 L4.4 6 L7.5 1.5" fill="none" stroke="#555" stroke-width="2"/></svg>
<div class="a" style="left:588px;top:730px;width:692px;height:16px;background:#f0f0f0"></div>
<div class="a" style="left:605px;top:730px;width:612px;height:15px;background:#c8c8c8"></div>
<svg class="a" style="left:592px;top:733px" width="8" height="10" viewBox="0 0 8 10"><path d="M6 1 L2 5 L6 9" fill="none" stroke="#5a5a5a" stroke-width="2"/></svg>
<svg class="a" style="left:1267px;top:733px" width="8" height="10" viewBox="0 0 8 10"><path d="M2 1 L6 5 L2 9" fill="none" stroke="#5a5a5a" stroke-width="2"/></svg>
<div class="a" style="left:1308px;top:440px;width:2px;height:2px;background:#555"></div>
<div class="a" style="left:1308px;top:444px;width:2px;height:2px;background:#555"></div>
<div class="a" style="left:1308px;top:448px;width:2px;height:2px;background:#555"></div>
<div class="a" style="left:1308px;top:452px;width:2px;height:2px;background:#555"></div>
<div class="a" style="left:0;top:0;width:1320px;height:1px;background:#8e8e8e"></div>
<div class="a" style="left:0;top:0;width:1px;height:750px;background:#8e8e8e"></div>
<div class="a" style="left:1319px;top:0;width:1px;height:750px;background:#7a7a7a"></div>
<div class="a" style="left:0;top:749px;width:1320px;height:1px;background:#7a7a7a"></div>
</body></html>
